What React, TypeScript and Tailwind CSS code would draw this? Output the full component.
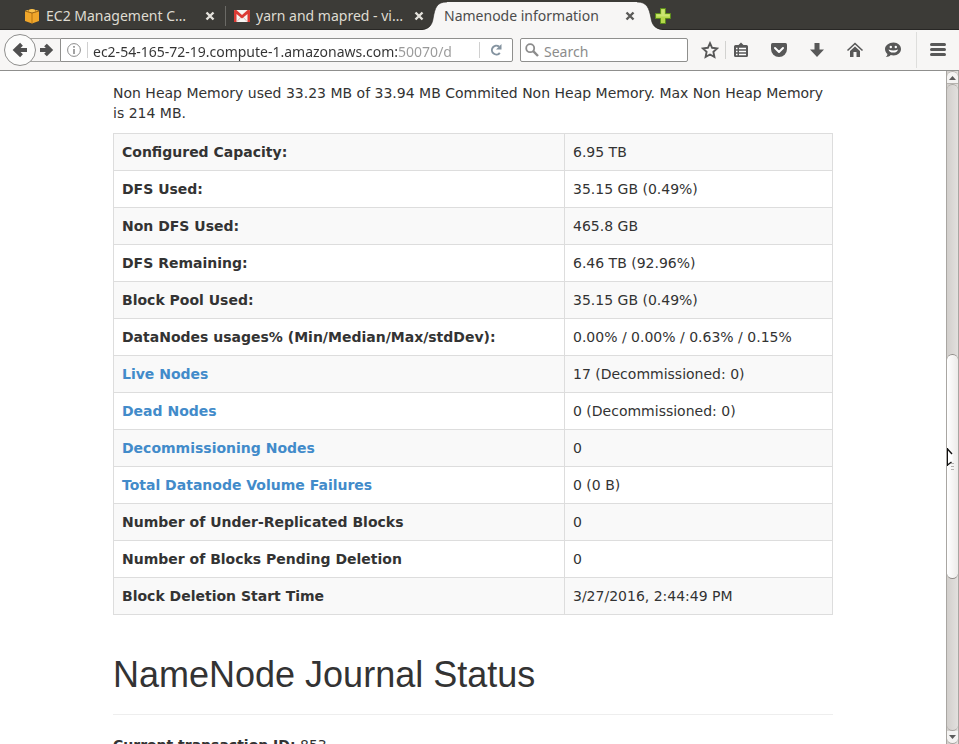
import type { ReactNode } from "react";

const chromeFont = "font-['Noto_Sans','Open_Sans',sans-serif]";

type Row = { label: string; value: string; link?: boolean };

const rows: Row[] = [
  { label: "Configured Capacity:", value: "6.95 TB" },
  { label: "DFS Used:", value: "35.15 GB (0.49%)" },
  { label: "Non DFS Used:", value: "465.8 GB" },
  { label: "DFS Remaining:", value: "6.46 TB (92.96%)" },
  { label: "Block Pool Used:", value: "35.15 GB (0.49%)" },
  { label: "DataNodes usages% (Min/Median/Max/stdDev):", value: "0.00% / 0.00% / 0.63% / 0.15%" },
  { label: "Live Nodes", value: "17 (Decommissioned: 0)", link: true },
  { label: "Dead Nodes", value: "0 (Decommissioned: 0)", link: true },
  { label: "Decommissioning Nodes", value: "0", link: true },
  { label: "Total Datanode Volume Failures", value: "0 (0 B)", link: true },
  { label: "Number of Under-Replicated Blocks", value: "0" },
  { label: "Number of Blocks Pending Deletion", value: "0" },
  { label: "Block Deletion Start Time", value: "3/27/2016, 2:44:49 PM" },
];

function CloseButton({ dark }: { dark?: boolean }) {
  return (
    <button type="button" aria-label="Close tab" className={dark ? "text-[#5a5a58]" : "text-[#e4e2dc]"}>
      <svg width="10" height="10" viewBox="0 0 10 10" stroke="currentColor" strokeWidth="2.4" className="block">
        <path d="M1.5 1.5 8.5 8.5M8.5 1.5 1.5 8.5" />
      </svg>
    </button>
  );
}

function CubeIcon() {
  return (
    <svg width="16" height="16" viewBox="0 0 16 16" className="block shrink-0">
      <path d="M1 3 8 1l7 2v10l-7 2.4L1 13Z" fill="#f0a62a" />
      <path d="M1 3 8 1l7 2-7 2Z" fill="#f9c24d" />
      <path d="M8 5v10.4" stroke="#b87410" strokeWidth="1" />
      <path d="M1 3l7 2 7-2" stroke="#8c5a12" strokeWidth=".9" fill="none" />
      <path d="M4.500 2v2.600M11.500 2v2.600" stroke="#c07c16" strokeWidth=".8" />
    </svg>
  );
}

function MailIcon() {
  return (
    <svg width="16" height="12" viewBox="0 0 16 12" className="block shrink-0">
      <rect width="16" height="12" rx="1" fill="#f6f4f2" />
      <path d="M3 11.500 7 7M13 11.500 9 7" stroke="#dcbcb8" strokeWidth="1" />
      <path d="M0 1C0 .4.400 0 1 0h1.400L8 5l5.600-5H15c.6 0 1 .4 1 1v11h-2.500V4L8 8.500 2.500 4v8H0Z" fill="#dc3a34" />
    </svg>
  );
}

function Tabs() {
  return (
    <div role="tablist" className={`flex h-[30px] shrink-0 bg-[#3c3b37] text-sm text-[#dfdbd2] shadow-[inset_0_-1px_0_#282725] ${chromeFont}`}>
      <div role="tab" className="flex w-[225px] items-center pt-0.5 pr-2.5 pl-6">
        <CubeIcon />
        <span className="ml-1.5 flex-1 whitespace-nowrap">EC2 Management C…</span>
        <CloseButton />
      </div>
      <div role="tab" className="flex w-[209px] items-center pt-0.5 pr-2.5 pl-2">
        <span className="-ml-2 mr-2 h-5 w-px bg-[#6b6a66]" />
        <MailIcon />
        <span className="ml-1.5 flex-1 whitespace-nowrap">yarn and mapred - vi…</span>
        <CloseButton />
      </div>
      <div role="tab" aria-selected="true" className="relative -ml-3 flex w-[241px] items-center pt-0.5 pr-7 pl-[22px] text-[#4c4c4c]">
        <svg width="241" height="30" viewBox="0 0 241 30" className="absolute inset-0">
          <path d="M0 30C7 29 10 25 11 19 13 7 15 2 25 2H215C225 2 227 8 229 18 230 25 233 29 241 30Z" fill="#f7f6f5" />
          <path d="M0 29.500C7 29 10 25 11 19 13 7 15 2 25 2M215 2C225 2 227 8 229 18 230 25 233 29 241 29.500" fill="none" stroke="#24231f" strokeOpacity=".6" />
        </svg>
        <span className="relative flex-1 whitespace-nowrap">Namenode information</span>
        <span className="relative">
          <CloseButton dark />
        </span>
      </div>
      <button type="button" aria-label="New tab" className="relative -ml-2 pt-0.5">
        <svg width="16" height="16" viewBox="0 0 16 16" className="block">
          <path d="M5.500 .5h5v5h5v5h-5v5h-5v-5h-5v-5h5Z" fill="#b5d84a" stroke="#5c8c1c" />
          <path d="M6.500 1.500h3v5h5v2h-13v-2h5Z" fill="#cbe573" />
        </svg>
      </button>
    </div>
  );
}

function ToolButton({ label, className, children }: { label: string; className: string; children: ReactNode }) {
  return (
    <button type="button" aria-label={label} className={`flex shrink-0 items-center justify-center text-[#585858] ${className}`}>
      <svg width="18" height="18" viewBox="0 0 18 18" className="block">
        {children}
      </svg>
    </button>
  );
}

function Toolbar() {
  return (
    <div className={`flex h-[41px] shrink-0 items-center border-b border-[#8f8f8d] bg-[#f7f6f5] pl-1 text-sm ${chromeFont}`}>
      <ToolButton label="Back" className="relative z-10 h-8 w-8 rounded-full border border-[#8f8f8d] bg-[#fcfcfb]">
        <path d="M10.500 3.200 4.500 9l6 5.800M5 9h11" fill="none" stroke="#505050" strokeWidth="4" />
      </ToolButton>
      <ToolButton label="Forward" className="-ml-1.5 h-6 w-[30px] border-y border-[#a5a5a3] pl-1">
        <path d="M7.500 4l5 5-5 5M2 9h10" fill="none" stroke="#505050" strokeWidth="3.800" />
      </ToolButton>
      <div className="flex h-6 min-w-0 flex-1 items-center rounded-r-xs border border-[#8f8f8d] bg-white">
        <svg width="14" height="14" viewBox="0 0 14 14" className="ml-1.5 block shrink-0">
          <circle cx="7" cy="7" r="6.400" fill="none" stroke="#8c8c8c" />
          <path d="M7 3v1.800M7 6v5" stroke="#8c8c8c" strokeWidth="1.600" />
        </svg>
        <span className="ml-1.5 h-4 w-px shrink-0 bg-[#d0d0d0]" />
        <input
          aria-label="Address"
          defaultValue="ec2-54-165-72-19.compute-1.amazonaws.com:50070/d"
          className="ml-[5px] h-[22px] min-w-0 flex-1 bg-[linear-gradient(to_right,#333333_304px,#999999_304px)] bg-clip-text pt-0.5 text-transparent outline-none"
        />
        <span className="h-4 w-px shrink-0 bg-[#d0d0d0]" />
        <button type="button" aria-label="Reload" className="flex w-8 shrink-0 justify-center">
          <svg width="14" height="14" viewBox="0 0 14 14" className="block">
            <path d="M10.800 9.800A4.400 4.400 0 1 1 10 3.600" fill="none" stroke="#8493a0" strokeWidth="2" />
            <path d="M12.500 1v5.500H7Z" fill="#8493a0" />
          </svg>
        </button>
      </div>
      <div className="ml-[7px] flex h-6 w-[168px] shrink-0 items-center rounded-xs border border-[#8f8f8d] bg-white">
        <svg width="14" height="14" viewBox="0 0 14 14" fill="none" stroke="#8c8c8c" className="ml-1 block shrink-0">
          <circle cx="5.200" cy="5.200" r="4" strokeWidth="1.800" />
          <path d="M8.200 8.200 13 13" strokeWidth="2.400" />
        </svg>
        <input aria-label="Search" placeholder="Search" className="ml-[5px] h-[22px] min-w-0 flex-1 pt-0.5 outline-none placeholder:text-[#8c8c8c]" />
      </div>
      <ToolButton label="Bookmark this page" className="ml-1.5 h-[18px] w-8 border-r border-[#d2d2d0]">
        <path d="M9 2.200l2.100 4.600 5 .6-3.700 3.500 1 5L9 13.500l-4.400 2.400 1-5L1.900 7.400l5-.6Z" fill="none" stroke="currentColor" strokeWidth="1.900" />
      </ToolButton>
      <ToolButton label="Bookmarks" className="h-8 w-[30px]">
        <path d="M2 5.500Q2 4 3.500 4H6.500L9 1.500l2.500 2.500h3Q16 4 16 5.500v9q0 1.500-1.500 1.500h-11Q2 16 2 14.500Z" fill="currentColor" />
        <path d="M4 7.500h1.500M7 7.500h7M4 10.500h1.500M7 10.500h7M4 13.500h1.500M7 13.500h7" stroke="#fff" strokeWidth="1.700" />
      </ToolButton>
      <ToolButton label="Save to Pocket" className="ml-1 h-8 w-[38px]">
        <path d="M1 3.500q0-1.500 1.500-1.500h13q1.500 0 1.500 1.500V8a8 8 0 0 1-16 0Z" fill="currentColor" />
        <path d="M5 7l4 4 4-4" fill="none" stroke="#fff" strokeWidth="2" strokeLinecap="round" strokeLinejoin="round" />
      </ToolButton>
      <ToolButton label="Downloads" className="h-8 w-[38px]">
        <path d="M6.500 2h5v6.500H16L9 16 2 8.500h4.500Z" fill="currentColor" />
      </ToolButton>
      <ToolButton label="Home" className="h-8 w-[38px]">
        <path d="M1.500 9.500 9 2.500l7.500 7" fill="none" stroke="currentColor" strokeWidth="1.600" />
        <path d="M4 10l5-4.600L14 10v6h-3.500v-5h-3v5H4Z" fill="currentColor" />
      </ToolButton>
      <ToolButton label="Chat" className="h-8 w-[38px]">
        <path d="M9.500 1.500c4.500 0 7.500 3 7.500 6.500s-3 6.500-7.500 6.500c-1 0-2-.1-2.800-.4C5.500 15.500 4 16 1.800 16c1-.8 1.600-1.800 1.600-3C2 11.800 1 10 1 8c0-3.500 4-6.500 8.500-6.500Z" fill="currentColor" />
        <circle cx="6.800" cy="6" r="1.200" fill="#fff" />
        <circle cx="11.800" cy="6" r="1.200" fill="#fff" />
        <path d="M4.500 8.500q4.700 2 9.500 0a4.800 3.600 0 0 1-9.500 0Z" fill="#fff" />
      </ToolButton>
      <span className="ml-1 h-9 w-px shrink-0 bg-[#dededc]" />
      <ToolButton label="Open menu" className="h-8 w-[42px]">
        <path d="M2.500 3.500h13M2.500 8.500h13M2.500 13.500h13" stroke="currentColor" strokeWidth="3" strokeLinecap="round" />
      </ToolButton>
    </div>
  );
}

function Scrollbar() {
  return (
    <div className="relative flex w-[13px] shrink-0 flex-col border-x border-[#a9a6a2] bg-linear-to-r from-[#d2cfcc] to-[#e2e0de]">
      <button type="button" aria-label="Scroll up" className="flex h-[13px] items-center justify-center rounded-t-md border-y border-[#b5b2ae] bg-[#f4f3f2]">
        <svg width="7" height="4" viewBox="0 0 7 4" className="block"><path d="M0 4 3.500 0 7 4Z" fill="#5c5c5c" /></svg>
      </button>
      <div className="grow-[271] rounded-t-md border-t border-[#a9a6a2]" />
      <div className="grow-[224] rounded-md border-y border-[#8f8c88] bg-linear-to-r from-white to-[#ecebe9]" />
      <div className="grow-[152] rounded-b-md border-b border-[#a9a6a2]" />
      <button type="button" aria-label="Scroll down" className="flex h-[13px] items-center justify-center rounded-b-md border-b border-[#a9a6a2] bg-[#f4f3f2]">
        <svg width="7" height="4" viewBox="0 0 7 4" className="block"><path d="M0 0 3.500 4 7 0Z" fill="#5c5c5c" /></svg>
      </button>
      <svg width="8" height="22" viewBox="0 0 8 22" className="absolute top-[377px] left-0">
        <path d="M1 1.500 5.500 6.500V13L1 17Z" fill="#fff" />
        <path d="M.5 0v18" stroke="#111" />
        <path d="M.5 1l4.500 5M.5 17l4-3" fill="none" stroke="#111" strokeWidth="1.400" />
        <path d="M4 15.500h3M4 18.500h3M4 21.500h3" stroke="#b4b2b0" />
      </svg>
    </div>
  );
}

export default function App() {
  return (
    <div className="flex h-screen flex-col overflow-hidden bg-white">
      <Tabs />
      <Toolbar />
      <div className="flex min-h-0 flex-1">
        <main className="min-w-0 flex-1 overflow-hidden font-['DejaVu_Sans',sans-serif] text-sm/5 text-[#333333]">
          <div className="mx-auto max-w-[750px] px-[15px] pt-3">
            <p className="mb-2.5">
              Non Heap Memory used 33.23 MB of 33.94 MB Commited Non Heap Memory. Max Non Heap Memory is 214 MB.
            </p>
            <table className="w-full border-collapse border border-[#dddddd]">
              <tbody>
                {rows.map((row) => (
                  <tr key={row.label} className="odd:bg-[#f9f9f9]">
                    <th scope="row" className="border border-[#dddddd] p-2 text-left font-bold">
                      {row.link ? <a href="#nodes" className="text-[#428bca]">{row.label}</a> : row.label}
                    </th>
                    <td className="w-[268px] border border-[#dddddd] p-2">{row.value}</td>
                  </tr>
                ))}
              </tbody>
            </table>
            <h1 className="mt-10 mb-5 border-b border-[#eeeeee] pb-[19px] font-['Liberation_Sans',sans-serif] text-4xl/10">
              NameNode Journal Status
            </h1>
            <p>
              <b>Current transaction ID:</b> 853
            </p>
          </div>
        </main>
        <Scrollbar />
      </div>
    </div>
  );
}
